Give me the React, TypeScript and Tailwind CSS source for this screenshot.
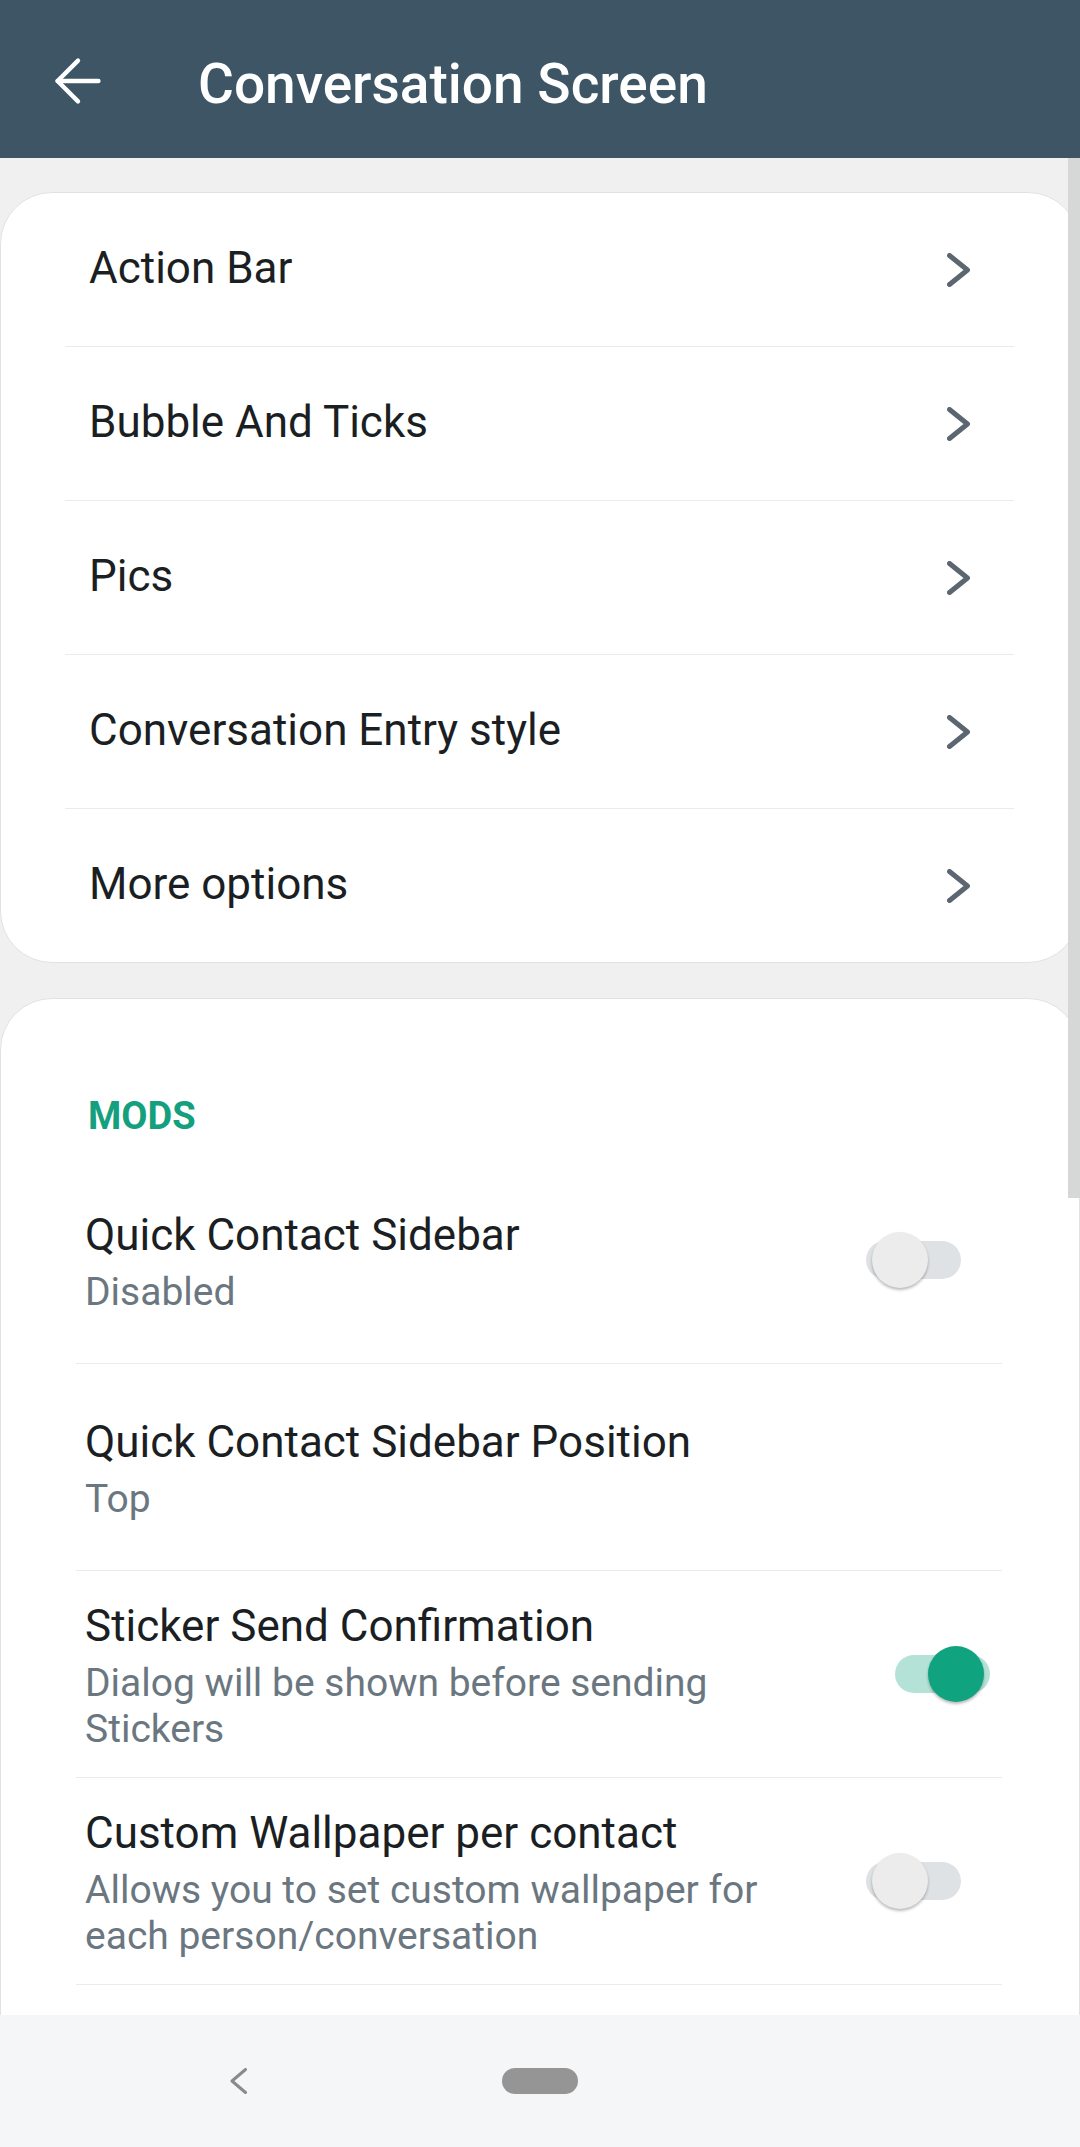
import React from "react";

function Chevron() {
  return (
    <svg width="24" height="34" viewBox="0 0 24 34" className="shrink-0">
      <polyline
        points="2.5,2.5 20.5,17 2.5,31.5"
        fill="none"
        stroke="#5b6670"
        strokeWidth="5"
        strokeLinecap="round"
        strokeLinejoin="round"
      />
    </svg>
  );
}

function NavRow({ label, last }: { label: string; last?: boolean }) {
  return (
    <>
      <div className="flex h-[153px] items-center pl-[88px] pr-[108px]">
        <span className="mb-[4px] flex-1 text-[44px] leading-[50px] text-[#1b1f23]">{label}</span>
        <Chevron />
      </div>
      {!last && <div className="ml-[64px] h-px w-[949px] bg-[#ebebeb]" />}
    </>
  );
}

function Toggle({ on }: { on?: boolean }) {
  return (
    <div className={`relative h-[56px] w-[95px] shrink-0 ${on ? "mr-[89px]" : "mr-[118px]"}`}>
      <div
        className={`absolute left-0 top-[9px] h-[38px] w-[95px] rounded-full ${
          on ? "bg-[#b4e2d7]" : "bg-[#dfe2e5]"
        }`}
      />
      <div
        className={`absolute top-0 h-[56px] w-[56px] rounded-full shadow-[0_2px_3px_rgba(0,0,0,0.28)] ${
          on ? "left-[33px] bg-[#10a37f]" : "left-[6px] bg-[#ececec]"
        }`}
      />
    </div>
  );
}

function ModRow({
  title,
  sub,
  toggle,
}: {
  title: string;
  sub: React.ReactNode;
  toggle?: "on" | "off";
}) {
  return (
    <>
      <div className="flex h-[206px] items-center pl-[84px]">
        <div className="mt-[4px] flex flex-1 flex-col">
          <span className="text-[44px] leading-[50px] text-[#1b1f23]">{title}</span>
          <span className="mt-[9px] text-[39px] leading-[46px] text-[#6b7780]">{sub}</span>
        </div>
        {toggle && <Toggle on={toggle === "on"} />}
      </div>
      <div className="ml-[75px] h-px w-[926px] bg-[#ebebeb]" />
    </>
  );
}

export default function App() {
  return (
    <div className="relative flex h-[2147px] w-[1080px] flex-col overflow-hidden bg-[#f0f0f0] font-['Roboto',sans-serif]">
      <header className="flex h-[158px] shrink-0 items-start bg-[#3d5565]">
        <svg
          width="70"
          height="70"
          viewBox="0 0 24 24"
          className="ml-[43px] mt-[46px] shrink-0"
          fill="none"
          stroke="#ffffff"
          strokeWidth="1.5"
          strokeLinecap="round"
          strokeLinejoin="round"
        >
          <path d="M19 12H5" />
          <path d="m12 19-7-7 7-7" />
        </svg>
        <h1 className="ml-[85px] mt-[56px] text-[55px] font-medium leading-[56px] text-white">
          Conversation Screen
        </h1>
      </header>

      <main className="flex flex-1 flex-col gap-[35px] overflow-hidden pt-[34px]">
        <section className="shrink-0 rounded-[52px] border border-[#e2e2e2] bg-white">
          <NavRow label="Action Bar" />
          <NavRow label="Bubble And Ticks" />
          <NavRow label="Pics" />
          <NavRow label="Conversation Entry style" />
          <NavRow label="More options" last />
        </section>

        <section className="shrink-0 rounded-t-[52px] border border-[#e2e2e2] bg-white pt-[95px]">
          <div className="mb-[19px] pl-[87px] text-[38px] font-bold leading-[44px] text-[#14a07e]">
            MODS
          </div>
          <ModRow title="Quick Contact Sidebar" sub="Disabled" toggle="off" />
          <ModRow title="Quick Contact Sidebar Position" sub="Top" />
          <ModRow
            title="Sticker Send Confirmation"
            sub={
              <>
                Dialog will be shown before sending
                <br />
                Stickers
              </>
            }
            toggle="on"
          />
          <ModRow
            title="Custom Wallpaper per contact"
            sub={
              <>
                Allows you to set custom wallpaper for
                <br />
                each person/conversation
              </>
            }
            toggle="off"
          />
          <div className="h-[200px]" />
        </section>
      </main>

      <nav className="flex h-[132px] shrink-0 items-center bg-[#f5f6f8] pl-[230px]">
        <svg width="18" height="26" viewBox="0 0 18 26" className="shrink-0">
          <polyline
            points="15.5,1.5 2,13 15.5,24.5"
            fill="none"
            stroke="#8a8a8a"
            strokeWidth="3"
            strokeLinecap="round"
            strokeLinejoin="round"
          />
        </svg>
        <div className="ml-[254px] h-[26px] w-[76px] rounded-full bg-[#959595]" />
      </nav>

      <div className="absolute right-0 top-[158px] h-[1040px] w-[12px] bg-[#d6d8d8]" />
    </div>
  );
}
